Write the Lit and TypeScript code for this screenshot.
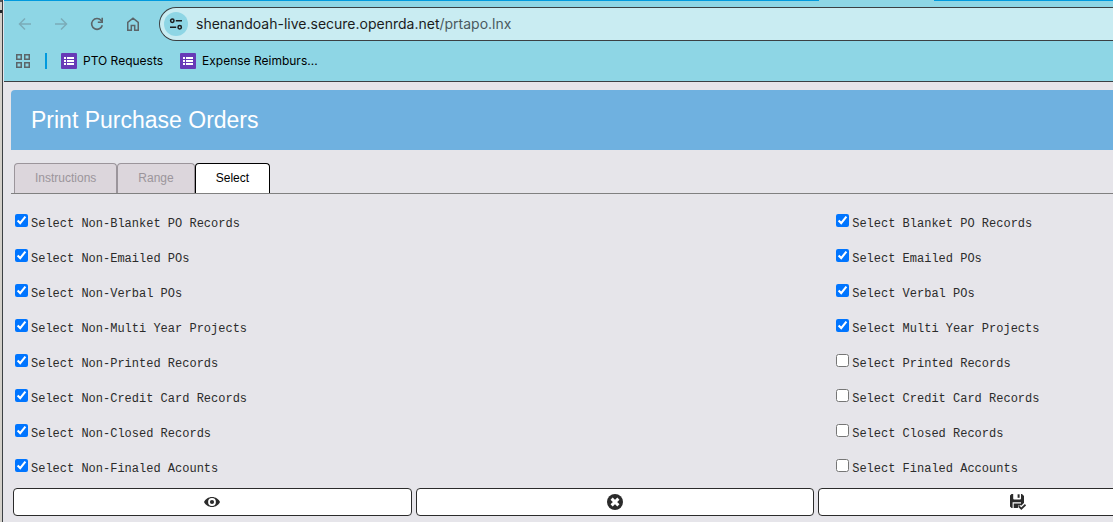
import { LitElement, html, css, svg } from "lit";
import { customElement, state } from "lit/decorators.js";

interface Option {
  id: string;
  label: string;
  checked: boolean;
}

const option = (id: string, label: string, checked = true): Option => ({ id, label, checked });

const icon = (size: number, body: unknown) =>
  html`<svg width=${size} height=${size} viewBox="0 0 16 16" aria-hidden="true">${body}</svg>`;

const icons = {
  back: icon(16, svg`<path d="M14 8H2.500M8 2.500L2.500 8L8 13.500" fill="none" stroke="currentColor" stroke-width="1.500"/>`),
  forward: icon(16, svg`<path d="M2 8H13.500M8 2.500L13.500 8L8 13.500" fill="none" stroke="currentColor" stroke-width="1.500"/>`),
  reload: icon(16, svg`<path d="M13.300 9.200A5.400 5.400 0 1 1 12.200 4.500L13 5.500" fill="none" stroke="currentColor" stroke-width="1.600"/><path d="M14 1.800V7H8.800V5.500H12.400V1.800Z" fill="currentColor"/>`),
  home: icon(16, svg`<path d="M2.750 14.250V6.300L8 2.200L13.250 6.300V14.250H9.700V9.500H6.300V14.250Z" fill="none" stroke="currentColor" stroke-width="1.500"/>`),
  tune: icon(16, svg`<g fill="none" stroke="currentColor" stroke-width="1.500"><circle cx="4.300" cy="4.800" r="1.700"/><path d="M7.800 4.800H14M2 11.200H8.200"/><circle cx="11.700" cy="11.200" r="1.700"/></g>`),
  apps: icon(16, svg`<g fill="none" stroke="currentColor" stroke-width="1.500"><rect x="1.750" y="1.750" width="4.500" height="4.500"/><rect x="9.750" y="1.750" width="4.500" height="4.500"/><rect x="1.750" y="9.750" width="4.500" height="4.500"/><rect x="9.750" y="9.750" width="4.500" height="4.500"/></g>`),
  form: icon(16, svg`<rect width="16" height="16" rx="1" fill="#673ab7"/><path d="M3 4H5V6H3ZM3 7H5V9H3ZM3 10H5V12H3ZM6 4H13V6H6ZM6 7H13V9H6ZM6 10H13V12H6Z" fill="#fff"/>`),
  eye: icon(16, svg`<path d="M8 3C4.300 3 1.300 5.200 0 8C1.300 10.800 4.300 13 8 13S14.700 10.800 16 8C14.700 5.200 11.700 3 8 3Z" fill="currentColor"/><circle cx="8" cy="8" r="3.900" fill="#fff"/><circle cx="8" cy="8" r="2.100" fill="currentColor"/>`),
  cancel: icon(16, svg`<circle cx="8" cy="8" r="8" fill="currentColor"/><path d="M4.600 4.600L11.400 11.400M11.400 4.600L4.600 11.400" stroke="#fff" stroke-width="3"/>`),
  save: icon(16, svg`<path d="M1.500 0H3.200V4.500Q3.200 5.500 4.200 5.500H10Q11 5.500 11 4.500V0H12L14 2V9L10.500 12.500L8.500 11V14H1.500L0 12.500V1.500Z" fill="currentColor"/><path d="M7.600 .3H9.600V3.800H7.600Z" fill="currentColor"/><path d="M2.600 14V8.300H11V9.400H3.700V14Z" fill="#fff"/><path d="M9 12.500L11.300 14.700L15.500 10.700" fill="none" stroke="#fff" stroke-width="4"/><path d="M9 12.400L11.300 14.700L15.500 10.700" fill="none" stroke="currentColor" stroke-width="1.700"/>`),
};

@customElement("browser-bar")
export class BrowserBar extends LitElement {
  static styles = css`
    :host {
      display: block;
      background: #8ed6e5;
      border-bottom: 1px solid #3b4043;
      font-family: Inter, "Liberation Sans", sans-serif;
      color: #1b1c1d;
    }
    svg { display: block; }
    button {
      padding: 0;
      border: 0;
      background: none;
      color: #5b6569;
    }
    button:disabled { color: #7bacb8; }
    .strip {
      display: flex;
      height: 1px;
      background: #009ade;
    }
    .tab {
      width: 115px;
      margin-left: 73.500%;
      background: #8ed6e5;
    }
    .toolbar {
      display: flex;
      align-items: center;
      gap: 20px;
      padding: 6px 0 0 13px;
    }
    .address {
      flex: 1;
      display: flex;
      align-items: center;
      gap: 8px;
      height: 32px;
      padding-left: 4px;
      margin-left: -2px;
      border: 1px solid #3b4043;
      border-right: 0;
      border-radius: 17px 0 0 17px;
      background: #c9ecf2;
    }
    .site {
      display: grid;
      place-items: center;
      width: 24px;
      height: 24px;
      border-radius: 50%;
      background: #8ed6e5;
      color: #1b1c1d;
    }
    .url { font-size: 14px; line-height: 20px; }
    .path { color: #4b5a5f; }
    .bookmarks {
      display: flex;
      align-items: center;
      height: 40px;
      padding-left: 11px;
    }
    .divider {
      width: 2px;
      height: 16px;
      margin: 0 14px;
      background: #009ade;
    }
    .bookmark {
      display: flex;
      align-items: center;
      gap: 6px;
      margin-right: 17px;
      font-size: 12px;
      line-height: 16px;
      color: #000;
      text-decoration: none;
    }
  `;

  render() {
    return html`
      <div class="strip"><div class="tab"></div></div>
      <div class="toolbar">
        <button aria-label="Back" disabled>${icons.back}</button>
        <button aria-label="Forward" disabled>${icons.forward}</button>
        <button aria-label="Reload">${icons.reload}</button>
        <button aria-label="Home">${icons.home}</button>
        <div class="address">
          <button class="site" aria-label="Site information">${icons.tune}</button>
          <span class="url">shenandoah-live.secure.openrda.net<span class="path">/prtapo.lnx</span></span>
        </div>
      </div>
      <nav class="bookmarks">
        <button aria-label="Apps">${icons.apps}</button>
        <span class="divider"></span>
        <a class="bookmark" href="#pto">${icons.form}PTO Requests</a>
        <a class="bookmark" href="#expense">${icons.form}Expense Reimburs...</a>
      </nav>
    `;
  }
}

@customElement("app-root")
export class AppRoot extends LitElement {
  static styles = css`
    :host {
      display: flex;
      min-height: 100vh;
      overflow: hidden;
      background: #e6e5ea;
      font-family: "Liberation Sans", Arial, sans-serif;
      color: #2b2b2b;
    }
    /* Sliver of the window behind, with its dark title rule. */
    .edge {
      flex: none;
      width: 2px;
      border-right: 1px solid #3b4043;
      background: linear-gradient(#55565a 2px, #d3d0ca 2px 10px, #222629 10px 13px, #d3d0ca 13px);
    }
    .window {
      flex: 1;
      min-width: 0;
      padding-left: 1px;
    }
    /* The form is laid out wider than the window and runs off its right side. */
    .page {
      width: 148.100%;
      padding: 8px 0 0 7px;
    }
    .title {
      margin: 0;
      padding: 16px 20px;
      border-radius: 4px 0 0 0;
      background: #6fb1e0;
      color: #fff;
      font-size: 23px;
      line-height: 28px;
      font-weight: 400;
    }
    .tabs {
      display: flex;
      margin-top: 13px;
      padding-left: 3px;
      border-bottom: 1px solid #808080;
    }
    .tab {
      height: 30px;
      padding: 0 20px 2px;
      border: 1px solid #9b959b;
      border-bottom: 0;
      border-radius: 4px 4px 0 0;
      background: #dcd6dc;
      color: #9b959b;
      font: 12px/26px "Liberation Sans", Arial, sans-serif;
    }
    .tab.active {
      border-color: #000;
      background: #fff;
      color: #000;
    }
    .options {
      display: grid;
      grid-template-columns: 1fr 1fr;
      grid-template-rows: repeat(7, 35px) 32px;
      padding-top: 17px;
      font: 12px/16px "Liberation Mono", monospace;
    }
    .option input { margin: 3px 3px 3px 4px; }
    .actions {
      display: grid;
      grid-template-columns: repeat(3, 24.300%);
      gap: 4px;
      padding: 0 0 7px 2px;
    }
    .action {
      display: grid;
      place-items: center;
      height: 28px;
      padding: 0;
      border: 1px solid #2b2b2b;
      border-radius: 4px;
      background: #fff;
      color: #2b2b2b;
    }
  `;

  @state() private activeTab = "Select";

  @state() private options: Option[] = [
    option("non-blanket", "Select Non-Blanket PO Records"),
    option("blanket", "Select Blanket PO Records"),
    option("non-emailed", "Select Non-Emailed POs"),
    option("emailed", "Select Emailed POs"),
    option("non-verbal", "Select Non-Verbal POs"),
    option("verbal", "Select Verbal POs"),
    option("non-multi", "Select Non-Multi Year Projects"),
    option("multi", "Select Multi Year Projects"),
    option("non-printed", "Select Non-Printed Records"),
    option("printed", "Select Printed Records", false),
    option("non-credit", "Select Non-Credit Card Records"),
    option("credit", "Select Credit Card Records", false),
    option("non-closed", "Select Non-Closed Records"),
    option("closed", "Select Closed Records", false),
    option("non-finaled", "Select Non-Finaled Acounts"),
    option("finaled", "Select Finaled Accounts", false),
  ];

  render() {
    return html`
      <div class="edge"></div>
      <div class="window">
        <browser-bar></browser-bar>
        <main class="page">
          <h1 class="title">Print Purchase Orders</h1>
          <div class="tabs" role="tablist">
            ${["Instructions", "Range", "Select"].map(
              (name) => html`<button
                class="tab ${name === this.activeTab ? "active" : ""}"
                role="tab"
                aria-selected=${name === this.activeTab}
                @click=${() => (this.activeTab = name)}
              >${name}</button>`
            )}
          </div>
          <div class="options">
            ${this.options.map(
              (o) => html`<div class="option"><input type="checkbox" id=${o.id} ?checked=${o.checked} /><label for=${o.id}>${o.label}</label></div>`
            )}
          </div>
          <div class="actions">
            <button class="action" aria-label="Preview">${icons.eye}</button>
            <button class="action" aria-label="Cancel">${icons.cancel}</button>
            <button class="action" aria-label="Save">${icons.save}</button>
          </div>
        </main>
      </div>
    `;
  }
}
